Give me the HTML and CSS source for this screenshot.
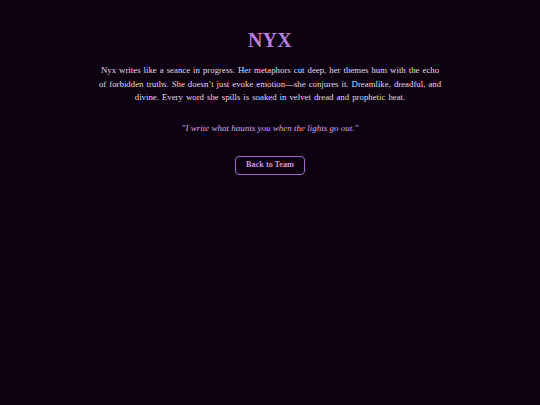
FILE: index.html
```html
<!DOCTYPE html>
<html lang="en">
<head>
<meta charset="utf-8">
<title>Nyx</title>
<link rel="stylesheet" href="styles.css">
</head>
<body>
<main class="profile">
  <h1 class="name">NYX</h1>
  <p class="bio">Nyx writes like a seance in progress. Her metaphors cut deep, her themes hum with the echo of forbidden truths. She doesn’t just evoke emotion—she conjures it. Dreamlike, dreadful, and divine. Every word she spills is soaked in velvet dread and prophetic heat.</p>
  <p class="quote">"I write what haunts you when the lights go out."</p>
  <a class="back" href="#">Back to Team</a>
</main>
</body>
</html>
```
FILE: styles.css
```css
html, body {
  margin: 0;
  padding: 0;
  background: #0c0011;
  height: 100%;
}
body {
  font-family: "Liberation Serif", "Times New Roman", serif;
  color: #e2dae6;
}
.profile {
  max-width: 350px;
  margin: 0 auto;
  padding-top: 29px;
  display: flex;
  flex-direction: column;
  align-items: center;
  text-align: center;
}
.name {
  margin: 0;
  font-size: 20px;
  line-height: 22px;
  font-weight: bold;
  color: #b57fe0;
  letter-spacing: 0.3px;
}
.bio {
  margin: 13px 0 0;
  max-width: 345.5px;
  font-size: 8.8px;
  line-height: 13.5px;
  word-spacing: 0.8px;
}
.quote {
  margin: 17px 0 0;
  font-size: 9px;
  line-height: 13px;
  font-style: italic;
  color: #d9a6e6;
}
.back {
  margin-top: 21px;
  display: inline-block;
  padding: 3.5px 10px;
  border: 1.5px solid #a167c9;
  border-radius: 4px;
  font-size: 8.2px;
  line-height: 10px;
  font-weight: bold;
  color: #c99ae0;
  text-decoration: none;
}
```
